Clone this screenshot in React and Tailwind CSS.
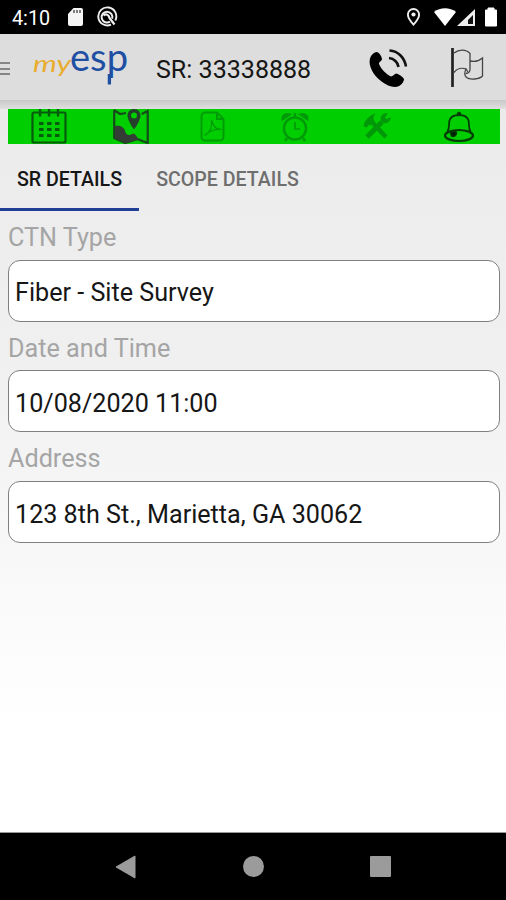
const fields = [
    { label: 'CTN Type', value: 'Fiber - Site Survey' },
    { label: 'Date and Time', value: '10/08/2020 11:00' },
    { label: 'Address', value: '123 8th St., Marietta, GA 30062' },
]

function StatusBar() {
    return (
        <div className="h-[34px] bg-black flex items-center justify-between pl-3 pr-2 text-white">
            <div className="flex items-center">
                <span className="w-[55px] text-[19.800px] leading-none pt-[3px]">4:10</span>
                {/* SD card */}
                <svg width="17" height="20" viewBox="0 0 17 20">
                    <path d="M6.500 1H14a2 2 0 0 1 2 2v14a2 2 0 0 1-2 2H3a2 2 0 0 1-2-2V7z" fill="#f5f5f5" />
                    <path d="M7 3v3M10 3v3M13 3v3" stroke="#333" strokeWidth="1.2" />
                </svg>
                {/* Disc logo */}
                <svg className="ml-3" width="22" height="22" viewBox="0 0 22 22" fill="none" stroke="#eee">
                    <path d="M15 18.600A9 9 0 1 1 19.300 14.500" strokeWidth="1.900" />
                    <path d="M14 15.600a5.400 5.400 0 1 1 2.200-3" strokeWidth="2" />
                    <path d="M7.500 9.500c3-2.500 5.500 0 6 2.500l5 6.500" strokeWidth="2.200" />
                </svg>
            </div>
            <div className="flex items-center">
                <svg width="15" height="20" viewBox="0 0 15 20">
                    <path d="M7.500 2a5.600 5.600 0 0 0-5.600 5.600c0 4.200 5.600 10 5.600 10s5.600-5.800 5.600-10A5.600 5.600 0 0 0 7.500 2z" fill="none" stroke="#eee" strokeWidth="1.9" />
                    <circle cx="7.500" cy="7.500" r="2.1" fill="#eee" />
                </svg>
                <svg className="ml-[13px]" width="22" height="18" viewBox="0 0 22 18">
                    <path d="M0 4C6-1 16-1 22 4L11 18z" fill="#fff" />
                </svg>
                <svg className="ml-px" width="19" height="19" viewBox="0 0 19 19">
                    <path d="M18 1v17H0z" fill="#eee" />
                    <path d="M16 7v9h-5v-4z" fill="#111" />
                </svg>
                <svg className="ml-[8px]" width="14" height="20" viewBox="0 0 14 20">
                    <path d="M4 1h6v2h2.500v16h-11V3H4z" fill="#fff" stroke="#fff" strokeLinejoin="round" />
                </svg>
            </div>
        </div>
    )
}

function Logo() {
    return (
        <svg width="98" height="54" viewBox="0 0 98 54" className="overflow-visible" role="img" aria-label="myesp">
            <text x="1" y="31.500" textLength="38" lengthAdjust="spacingAndGlyphs" fontFamily="Lato, sans-serif" fontSize="23" fontStyle="italic" fill="#e9ac2c">my</text>
            <text x="38" y="31" textLength="58" lengthAdjust="spacingAndGlyphs" fontFamily="Lato, sans-serif" fontSize="39.500" fill="#1f4fa3">esp</text>
            {/* long tail under the last letter */}
            <path d="M77.400 34v10.500" stroke="#1f4fa3" strokeWidth="3.300" />
        </svg>
    )
}

function Header() {
    return (
        <header className="h-[66px] bg-[#dddddd] flex items-center">
            {/* Drawer handle, cut off by the screen edge */}
            <div className="w-[10px] flex flex-col gap-[3.500px] mt-[3px]">
                <span className="h-[2px] bg-[#858585]" />
                <span className="h-[2px] bg-[#858585]" />
                <span className="h-[2px] bg-[#858585]" />
            </div>
            <div className="ml-[22px]">
                <Logo />
            </div>
            <h1 className="ml-[26px] w-[211px] mt-[6px] text-[25.050px] text-[#161616] whitespace-nowrap">SR: 33338888</h1>
            <svg width="42" height="42" viewBox="0 0 42 42" className="mt-[3px]" aria-label="Call">
                <path d="M4 8c2-2.500 4-4 6-4 2.500 1 4.500 4 5 7 0 2-3.500 3-3 5 2 5 7 10 12 12.500 2 0 3.500-3 5.500-3 3 1 6 3 7.500 5.500 0 3-3 6.500-6 7.500-6 2-15-3-20-8C5 25 0 15 4 8z" fill="#000" />
                <path d="M22 10c5 .5 9 4.500 9.500 9M22.500 2.500c9 .5 15 7.500 16.500 16" fill="none" stroke="#111" strokeWidth="2.600" />
            </svg>
            <svg width="36" height="42" viewBox="0 0 36 42" className="ml-[40px] mt-[2px]" fill="none" stroke="#444" aria-label="Flag">
                <path d="M3.500 1v39" stroke="#222" strokeWidth="2.700" />
                <path d="M5 6c5-4 12-4 16 .5v15.500c0 3-2 4.500-4.500 4.500M5 25.500c3-4 8-5 12-3.500" strokeWidth="1.300" />
                <path d="M21 14c4 1 9 0 12.500-3v18c-3 3.500-13 4-16 1.500-2-2-2-5.500-.5-8.500l2 3" strokeWidth="1.300" />
            </svg>
        </header>
    )
}

function Toolbar() {
    return (
        <div className="ml-2 mr-[6.500px] h-[35px] bg-[#00ce00] grid grid-cols-6 justify-items-center items-center">
            <svg width="36" height="35" viewBox="0 0 36 35" fill="none" stroke="#065c0c">
                <rect x="1.500" y="3.500" width="33" height="30" rx="1.500" strokeWidth="2.200" />
                <path d="M9 0v7.500M18 0v7.500M27 0v7.500" strokeWidth="2.400" />
                <path d="M8 14.500h21M8 20.500h21M8 26.500h21" strokeWidth="3.200" strokeDasharray="4.500 3.500" />
            </svg>
            <svg width="36" height="35" viewBox="0 0 36 35">
                <path d="M1.200 1v28l11 5 12-4 10.500 4V2l-6 3M1 1l6 4 6-1" fill="none" stroke="#174a1b" strokeWidth="2.200" />
                <path d="M2 17c5-1 9 1 10 5 1 4 4 5 7 3 3-1 5 2 6 6l-12 3-11-5z" fill="#333d35" />
                <path d="M21 0c-4 0-6.500 3-6.500 6.500 0 5 6.500 14 6.500 14S27.500 11.500 27.500 6.500C27.500 3 25 0 21 0z" fill="#24402a" />
                <circle cx="21" cy="6.500" r="3" fill="#00ce00" />
            </svg>
            <svg width="26" height="31" viewBox="0 0 26 31" fill="none" stroke="#009c08" strokeWidth="2">
                <path d="M17 1.500H5A3.500 3.500 0 0 0 1.500 5v21A3.500 3.500 0 0 0 5 29.500h15a3.500 3.500 0 0 0 3.500-3.500V8z" />
                <path d="M17 1.500V8h6.500" />
                <path d="M11.500 9c2 7 5 10 10 9.500-5-1-12 1-17 6 5-2 8-8 7-15.500z" strokeWidth="1.300" />
            </svg>
            <svg width="32" height="31" viewBox="0 0 32 31" fill="none" stroke="#009a08">
                <circle cx="16" cy="17.500" r="11" strokeWidth="2.500" />
                <path d="M16 11v7h5" strokeWidth="1.700" />
                <path d="M3.500 8.500C3 4 7 2 11 3.500zM28.500 8.500C29 4 25 2 21 3.500z" fill="#009a08" strokeWidth="2" />
                <path d="M8 27l-2 3M24 27l2 3M16 2v4" strokeWidth="2.500" />
            </svg>
            <svg width="30" height="29" viewBox="0 0 30 29" fill="none" stroke="#009708">
                <path d="M10 10l14 15" strokeWidth="4.500" />
                <path d="M2 14c1-5 4-9 11-12-3 3-2 5-1 7l-4 4c-2-1-3 0-3 2z" fill="#009708" strokeWidth="1" />
                <path d="M5 25L20 10" strokeWidth="5" />
                <path d="M25 1.500c-5 0-7 4-5.500 7.500 2 3 8 2 9-3l-4 1.500-2-2z" fill="#009708" strokeWidth="1" />
            </svg>
            <svg width="32" height="33" viewBox="0 0 32 33" fill="none" stroke="#043b06">
                <circle cx="16" cy="4" r="1.800" fill="#043b06" strokeWidth="1" />
                <path d="M4.500 21.500C7 17 5.500 14 6.500 10.500 7.500 7 11 5 16 5s8.500 2 9.500 5.500C26.500 14 25 17 27.500 21.500" strokeWidth="1.800" />
                <ellipse cx="16" cy="25.500" rx="14" ry="5.500" strokeWidth="2.200" />
                <path d="M7.500 23c2-2 6-2 6 0 0 3-3 4-5 3z" fill="#031c04" strokeWidth="1.500" />
            </svg>
        </div>
    )
}

function Tabs() {
    return (
        <div className="h-[67px] flex text-[19.600px] font-medium whitespace-nowrap">
            <button className="w-[139px] border-b-[3px] border-[#213f95] text-[#161616] text-center pt-[7px]">SR DETAILS</button>
            <button className="w-[177px] border-b-[3px] border-transparent text-[#6e6e6e] text-center pt-[7px]">SCOPE DETAILS</button>
        </div>
    )
}

function Field({ label, value }) {
    return (
        <div className="h-[110.700px]">
            <div className="h-[48.500px] pt-[10px] text-[25.200px] leading-[34px] text-[#a5a5a5]">{label}</div>
            <div className="h-[62px] bg-white border-[1.500px] border-[#808080] rounded-[12px] pl-[6px] flex items-center text-[25.150px] text-[#161616] pt-[5px]">
                {value}
            </div>
        </div>
    )
}

function NavBar() {
    return (
        <nav className="h-[68px] bg-black border-t border-[#999] flex items-center justify-between pl-[115px] pr-[115px]">
            <svg width="21" height="24" viewBox="0 0 21 24"><path d="M20 1v22L1 12z" fill="#9b9b9b" stroke="#9b9b9b" strokeLinejoin="round" /></svg>
            <span className="w-[21px] h-[21px] rounded-full bg-[#9b9b9b]" />
            <span className="w-[21px] h-[21px] rounded-[1px] bg-[#9b9b9b]" />
        </nav>
    )
}

export default function App() {
    return (
        <div className="w-[506px] h-[900px] overflow-hidden flex flex-col font-['Roboto',sans-serif]">
            <StatusBar />
            <Header />
            <div className="h-[9px] bg-linear-to-b from-[#c8c8c8] to-[#e0e0e0]" />
            <main className="flex-1 bg-linear-to-b from-[#ebebeb] from-0% via-[#f0f0f0] via-35% to-white to-85%">
                <Toolbar />
                <Tabs />
                <div className="pl-2 pr-[6.500px]">
                    {fields.map((field) => (
                        <Field key={field.label} label={field.label} value={field.value} />
                    ))}
                </div>
            </main>
            <NavBar />
        </div>
    )
}
